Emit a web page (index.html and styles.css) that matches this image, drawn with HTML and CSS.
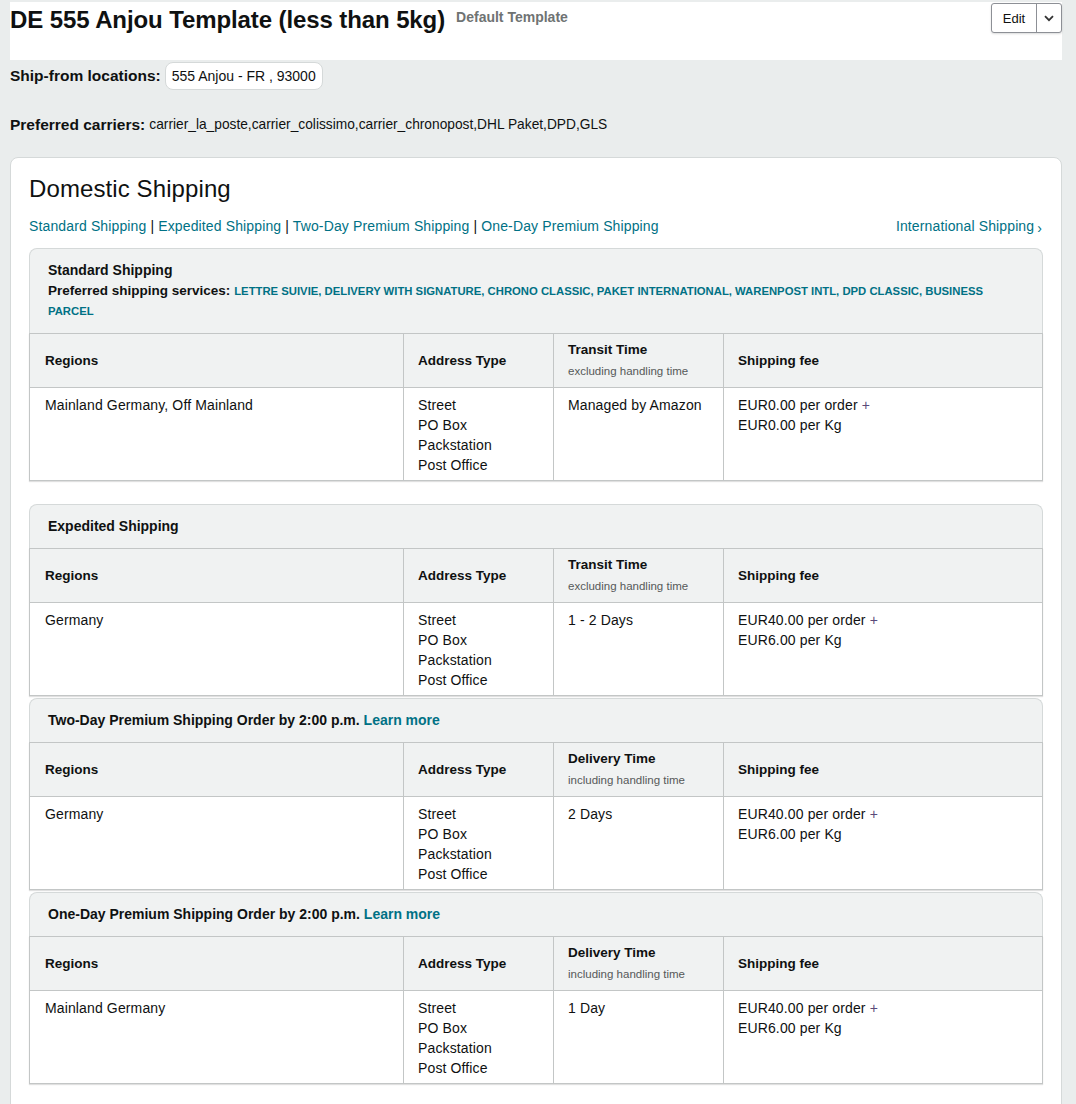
FILE: index.html
```html
<!DOCTYPE html>
<html lang="en">
<head>
<meta charset="utf-8">
<title>DE 555 Anjou Template</title>
<link rel="stylesheet" href="styles.css">
</head>
<body>
<div class="page">
  <header class="head">
    <div class="title-wrap">
      <h1 class="title">DE 555 Anjou Template (less than 5kg)</h1>
      <span class="default">Default Template</span>
    </div>
    <div class="edit">
      <span class="edit-main">Edit</span>
      <span class="edit-caret">
        <svg width="10" height="7" viewBox="0 0 10 7"><path d="M1 1.2 L5 5.2 L9 1.2" fill="none" stroke="#333" stroke-width="1.8"/></svg>
      </span>
    </div>
  </header>

  <div class="meta-row ship-from">
    <span class="meta-label">Ship-from locations:</span>
    <span class="badge">555 Anjou - FR , 93000</span>
  </div>
  <div class="meta-row carriers">
    <span class="meta-label">Preferred carriers:</span>
    <span class="meta-value">carrier_la_poste,carrier_colissimo,carrier_chronopost,DHL Paket,DPD,GLS</span>
  </div>

  <section class="card">
    <h2 class="card-title">Domestic Shipping</h2>
    <nav class="links">
      <div class="links-left">
        <a class="link">Standard Shipping</a><span class="sep"> | </span><a class="link">Expedited Shipping</a><span class="sep"> | </span><a class="link">Two-Day Premium Shipping</a><span class="sep"> | </span><a class="link">One-Day Premium Shipping</a>
      </div>
      <a class="link intl">International Shipping<span class="chev">›</span></a>
    </nav>

    <div class="sec sec-first">
      <div class="sec-head">
        <div class="sec-name">Standard Shipping</div>
        <div class="sec-services"><b class="svc-label">Preferred shipping services:</b> <span class="services">LETTRE SUIVIE, DELIVERY WITH SIGNATURE, CHRONO CLASSIC, PAKET INTERNATIONAL, WARENPOST INTL, DPD CLASSIC, BUSINESS</span></div>
        <div class="sec-services"><span class="services">PARCEL</span></div>
      </div>
      <table class="rates">
        <colgroup><col class="c1"><col class="c2"><col class="c3"><col></colgroup>
        <thead><tr><th>Regions</th><th>Address Type</th><th>Transit Time<div class="sub">excluding handling time</div></th><th>Shipping fee</th></tr></thead>
        <tbody><tr><td>Mainland Germany, Off Mainland</td><td>Street<br>PO Box<br>Packstation<br>Post Office</td><td>Managed by Amazon</td><td>EUR0.00 per order <span class="plus">+</span><br>EUR0.00 per Kg</td></tr></tbody>
      </table>
    </div>

    <div class="sec">
      <div class="sec-head"><div class="sec-name">Expedited Shipping</div></div>
      <table class="rates">
        <colgroup><col class="c1"><col class="c2"><col class="c3"><col></colgroup>
        <thead><tr><th>Regions</th><th>Address Type</th><th>Transit Time<div class="sub">excluding handling time</div></th><th>Shipping fee</th></tr></thead>
        <tbody><tr><td>Germany</td><td>Street<br>PO Box<br>Packstation<br>Post Office</td><td>1 - 2 Days</td><td>EUR40.00 per order <span class="plus">+</span><br>EUR6.00 per Kg</td></tr></tbody>
      </table>
    </div>

    <div class="sec">
      <div class="sec-head"><div class="sec-name">Two-Day Premium Shipping Order by 2:00 p.m. <a class="learn">Learn more</a></div></div>
      <table class="rates">
        <colgroup><col class="c1"><col class="c2"><col class="c3"><col></colgroup>
        <thead><tr><th>Regions</th><th>Address Type</th><th>Delivery Time<div class="sub">including handling time</div></th><th>Shipping fee</th></tr></thead>
        <tbody><tr><td>Germany</td><td>Street<br>PO Box<br>Packstation<br>Post Office</td><td>2 Days</td><td>EUR40.00 per order <span class="plus">+</span><br>EUR6.00 per Kg</td></tr></tbody>
      </table>
    </div>

    <div class="sec">
      <div class="sec-head"><div class="sec-name">One-Day Premium Shipping Order by 2:00 p.m. <a class="learn">Learn more</a></div></div>
      <table class="rates">
        <colgroup><col class="c1"><col class="c2"><col class="c3"><col></colgroup>
        <thead><tr><th>Regions</th><th>Address Type</th><th>Delivery Time<div class="sub">including handling time</div></th><th>Shipping fee</th></tr></thead>
        <tbody><tr><td>Mainland Germany</td><td>Street<br>PO Box<br>Packstation<br>Post Office</td><td>1 Day</td><td>EUR40.00 per order <span class="plus">+</span><br>EUR6.00 per Kg</td></tr></tbody>
      </table>
    </div>
  </section>
</div>
</body>
</html>
```

FILE: styles.css
```css
* { box-sizing: border-box; }
body {
  margin: 0;
  background: #eaeded;
  font-family: "Liberation Sans", Arial, sans-serif;
  color: #0f1111;
  font-size: 14px;
}
.page { padding: 2px 14px 0 10px; }

.head {
  background: #fff;
  height: 58px;
  display: flex;
  justify-content: space-between;
  align-items: flex-start;
}
.title-wrap { display: flex; align-items: flex-start; gap: 11px; padding-top: 4px; }
.title { margin: 0; font-size: 24px; line-height: 28px; font-weight: 700; color: #0f1111; letter-spacing: -0.1px; }
.default { font-size: 14px; font-weight: 700; color: #6f7373; line-height: 18px; margin-top: 2px; }

.edit {
  display: flex;
  margin-top: 1px;
  height: 30px;
  background: #fff;
  border: 1px solid #8d9096;
  border-radius: 3px;
  box-shadow: 0 1px 2px rgba(15, 17, 17, 0.15);
}
.edit-main {
  width: 45px;
  display: flex;
  align-items: center;
  justify-content: center;
  font-size: 13px;
  border-right: 1px solid #8d9096;
}
.edit-caret { width: 24px; display: flex; align-items: center; justify-content: center; }

.meta-row { display: flex; align-items: center; gap: 4px; }
.ship-from { margin-top: 2px; height: 28px; }
.carriers { margin-top: 25px; line-height: 20px; }
.meta-label { font-weight: 700; font-size: 15.5px; }
.meta-value { font-size: 13.75px; }
.badge {
  background: #fff;
  border: 1px solid #d5d9d9;
  border-radius: 8px;
  height: 28px;
  padding: 0 6px;
  display: flex;
  align-items: center;
  font-size: 14px;
}

.card {
  margin-top: 22px;
  background: #fff;
  border: 1px solid #d5d9d9;
  border-radius: 8px;
  padding: 16px 18px 32px;
}
.card-title { margin: 0; font-size: 24px; font-weight: 400; line-height: 30px; letter-spacing: 0.1px; }
.links {
  margin-top: 12px;
  display: flex;
  justify-content: space-between;
  line-height: 20px;
  font-size: 14px;
  letter-spacing: 0.13px;
}
.link { color: #007185; text-decoration: none; }
.sep { color: #0f1111; }
.intl { padding-right: 1px; }
.chev { font-size: 14px; margin-left: 3px; position: relative; top: 2px; }

.sec { margin-top: 12px; }
.sec + .sec { margin-top: 2px; }
.sec-first { margin-bottom: 23px; }

.sec-head {
  background: #f0f2f2;
  border: 1px solid #d5d9d9;
  border-bottom: none;
  border-radius: 8px 8px 0 0;
  padding: 11px 18px 12px;
  line-height: 20px;
}
.sec-first .sec-head { padding-bottom: 13px; }
.sec-name { font-weight: 700; font-size: 14px; }
.sec-services { font-size: 14px; line-height: 20px; height: 20px; white-space: nowrap; }
.svc-label { font-size: 13.5px; }
.services { color: #007185; font-weight: 700; font-size: 11.3px; line-height: 1; }
.learn { color: #007185; }

.rates {
  width: 100%;
  border-collapse: collapse;
  table-layout: fixed;
  border: 1px solid #c3c6c6;
  box-shadow: 0 1px 1px rgba(0, 0, 0, 0.12);
}
.c1 { width: 374px; }
.c2 { width: 150px; }
.c3 { width: 170px; }
.rates th, .rates td {
  border: 1px solid #c3c6c6;
  text-align: left;
  padding-left: 14px;
  padding-right: 10px;
}
.rates th:first-child, .rates td:first-child { padding-left: 15px; }
.rates th {
  background: #f0f2f2;
  font-weight: 700;
  font-size: 13.5px;
  vertical-align: middle;
  padding-top: 6px;
  padding-bottom: 5px;
  height: 54px;
  line-height: 20px;
}
.sub { font-size: 11.5px; font-weight: 400; color: #565959; line-height: 22px; }
.rates td {
  vertical-align: top;
  line-height: 20px;
  padding-top: 7px;
  padding-bottom: 5px;
  letter-spacing: 0.13px;
}
.plus { color: #5a4a7a; }
```
